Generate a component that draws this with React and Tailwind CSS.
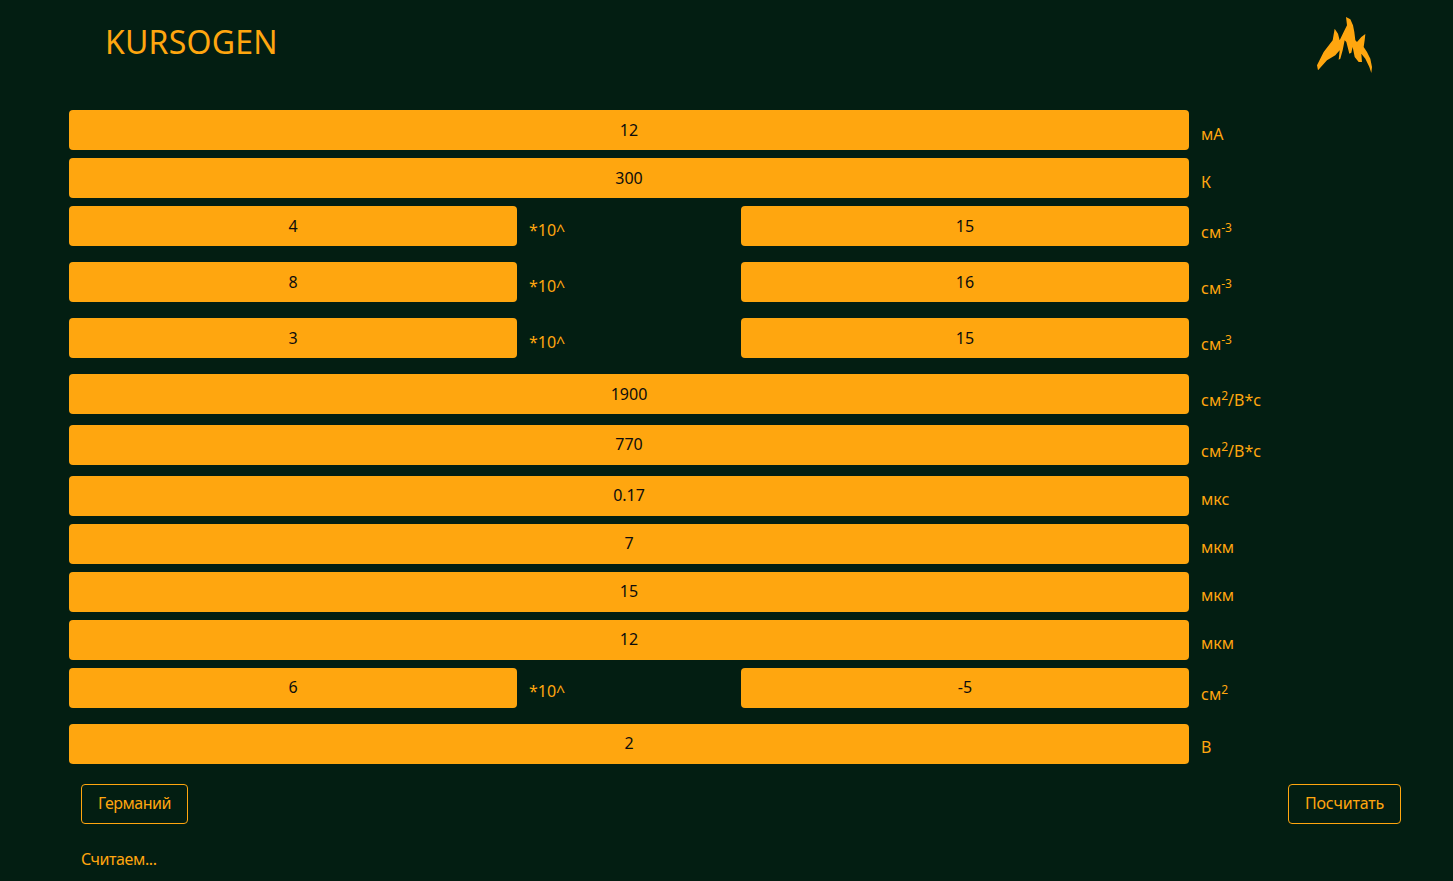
import React from 'react';

// lift: rows below the mobility block have their value 1px higher
const Field = ({ value, half, lift }) => (
    <input
        readOnly
        value={value}
        className={`${half ? 'w-[448px]' : 'w-[1120px]'} ${lift ? 'pb-[2px]' : ''} h-10 rounded bg-[#ffa60f] text-center text-base text-[#0d0d0d] outline-none`}
    />
);

// sup bumps the line box in the original, so those labels sit 2px lower
const Unit = ({ children, low }) => (
    <span className={`pl-3 ${low ? 'pt-[14px]' : 'pt-[11.5px]'} text-base leading-6`}>{children}</span>
);

const Row = ({ value, unit, low, lift, mb = 'mb-2' }) => (
    <div className={`flex items-start ${mb}`}>
        <Field value={value} lift={lift} />
        <Unit low={low}>{unit}</Unit>
    </div>
);

const PowerRow = ({ base, power, unit, lift, mb = 'mb-4' }) => (
    <div className={`flex items-start ${mb}`}>
        <Field value={base} half lift={lift} />
        <span className="w-[224px] pl-3 pt-[11.5px] text-base leading-6">*10^</span>
        <Field value={power} half lift={lift} />
        <Unit low>{unit}</Unit>
    </div>
);

const perCm3 = <>см<sup>-3</sup></>;
const mobility = <>см<sup>2</sup>/В*с</>;

const App = () => {
    return (
        <div
            className="min-h-screen bg-[#031e12] text-[#ffa60f] overflow-hidden"
            style={{ fontFamily: '"Noto Sans", sans-serif' }}
        >
            {/* header */}
            <header className="flex items-start justify-between h-[110px] pl-[105px] pr-[75px]">
                <h1 className="mt-[20px] text-[32px] leading-[44px] font-normal tracking-[0.2px]">KURSOGEN</h1>
                <svg className="mt-3 w-[66px] h-[66px]" viewBox="0 0 198 198" fill="#ffa60f">
                    <path d="M102 15 L115 22 L123 40 L127 60 L130 85 L135 90 L148 75 L160 66 L158 85 L155 105 L165 120 L175 140 L180 165 L178 183 L172 165 L160 140 L148 125 L150 150 L140 150 L128 135 L122 105 L118 122 L112 125 L103 90 L98 85 L92 115 L85 140 L80 143 L83 115 L70 130 L45 145 L18 175 L15 160 L35 120 L62 85 L68 50 L78 65 L83 85 L95 60 L105 40 Z" />
                </svg>
            </header>

            <main className="pl-[69px] pr-[52px]">
                <Row value="12" unit="мА" />
                <Row value="300" unit="К" />
                <PowerRow base="4" power="15" unit={perCm3} />
                <PowerRow base="8" power="16" unit={perCm3} />
                <PowerRow base="3" power="15" unit={perCm3} />
                <Row value="1900" unit={mobility} low mb="mb-[10.5px]" />
                <Row value="770" unit={mobility} low lift mb="mb-[11px]" />
                <Row value="0.17" unit="мкс" lift />
                <Row value="7" unit="мкм" lift />
                <Row value="15" unit="мкм" lift />
                <Row value="12" unit="мкм" lift />
                <PowerRow base="6" power="-5" unit={<>см<sup>2</sup></>} lift />
                <Row value="2" unit="В" lift mb="mb-5" />

                <div className="flex justify-between pl-3">
                    <button className="h-10 w-[107px] rounded border border-[#ffa60f] text-base leading-[23px] tracking-[-0.5px]">Германий</button>
                    <button className="h-10 w-[113px] rounded border border-[#ffa60f] text-base leading-[23px] tracking-[-0.2px]">Посчитать</button>
                </div>
                <p className="mt-[23px] pl-3 text-base leading-6 tracking-[-0.4px]">Считаем...</p>
            </main>
        </div>
    );
};

export default App;
